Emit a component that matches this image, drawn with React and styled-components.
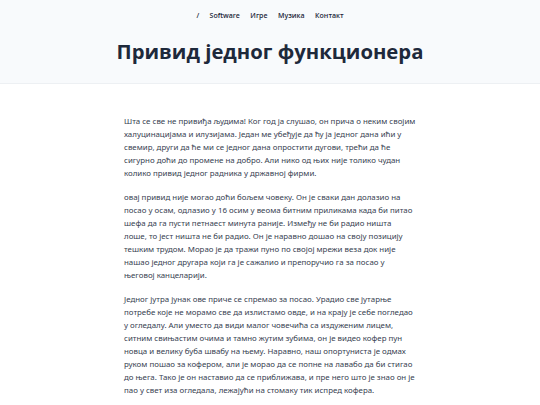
import React from "react";
import styled, { createGlobalStyle } from "styled-components";

const Global = createGlobalStyle`
  * { box-sizing: border-box; }
  html, body { margin: 0; padding: 0; background: #ffffff; }
  body { font-family: "Open Sans", "Noto Sans", sans-serif; }
`;

const Header = styled.header`
  background: #f8fafc;
  border-bottom: 1px solid #edf0f3;
  padding: 10px 0 17px;
  display: flex;
  flex-direction: column;
  align-items: center;
`;

const Nav = styled.nav`
  display: flex;
  gap: 10.5px;
  align-items: center;
`;

const NavLink = styled.a`
  font-size: 7px;
  font-weight: 600;
  color: #1e293b;
  text-decoration: none;
  line-height: 12px;
`;

const Title = styled.h1`
  margin: 14px 0 0;
  font-size: 20.3px;
  font-weight: 700;
  color: #1e293b;
  line-height: 30px;
`;

const Main = styled.main`
  width: 292px;
  margin: 0 auto;
  padding-top: 31px;
`;

const Para = styled.p`
  margin: 0 0 11px;
  font-family: "Noto Sans", "Open Sans", sans-serif;
  font-size: 7.9px;
  line-height: 13px;
  color: #374151;
`;

const paragraphs = [
  "Шта се све не привиђа људима! Ког год ја слушао, он прича о неким својим халуцинацијама и илузијама. Један ме убеђује да ћу ја једног дана ићи у свемир, други да ће ми се једног дана опростити дугови, трећи да ће сигурно доћи до промене на добро. Али нико од њих није толико чудан колико привид једног радника у државној фирми.",
  "овај привид није могао доћи бољем човеку. Он је сваки дан долазио на посао у осам, одлазио у 16 осим у веома битним приликама када би питао шефа да га пусти петнаест минута раније. Између не би радио ништа лоше, то јест ништа не би радио. Он је наравно дошао на своју позицију тешким трудом. Морао је да тражи пуно по својој мрежи веза док није нашао једног другара који га је сажалио и препоручио га за посао у његовој канцеларији.",
  "Једног јутра јунак ове приче се спремао за посао. Урадио све јутарње потребе које не морамо све да излистамо овде, и на крају је себе погледао у огледалу. Али уместо да види малог човечића са издуженим лицем, ситним свињастим очима и тамно жутим зубима, он је видео кофер пун новца и велику буба швабу на њему. Наравно, наш опортуниста је одмах руком пошао за кофером, али је морао да се попне на лавабо да би стигао до њега. Тако је он наставио да се приближава, и пре него што је знао он је пао у свет иза огледала, лежајући на стомаку тик испред кофера.",
];

export default function App() {
  return (
    <>
      <Global />
      <Header>
        <Nav>
          <NavLink href="#">/</NavLink>
          <NavLink href="#">Software</NavLink>
          <NavLink href="#">Игре</NavLink>
          <NavLink href="#">Музика</NavLink>
          <NavLink href="#">Контакт</NavLink>
        </Nav>
        <Title>Привид једног функционера</Title>
      </Header>
      <Main>
        {paragraphs.map((t, i) => (
          <Para key={i}>{t}</Para>
        ))}
      </Main>
    </>
  );
}
